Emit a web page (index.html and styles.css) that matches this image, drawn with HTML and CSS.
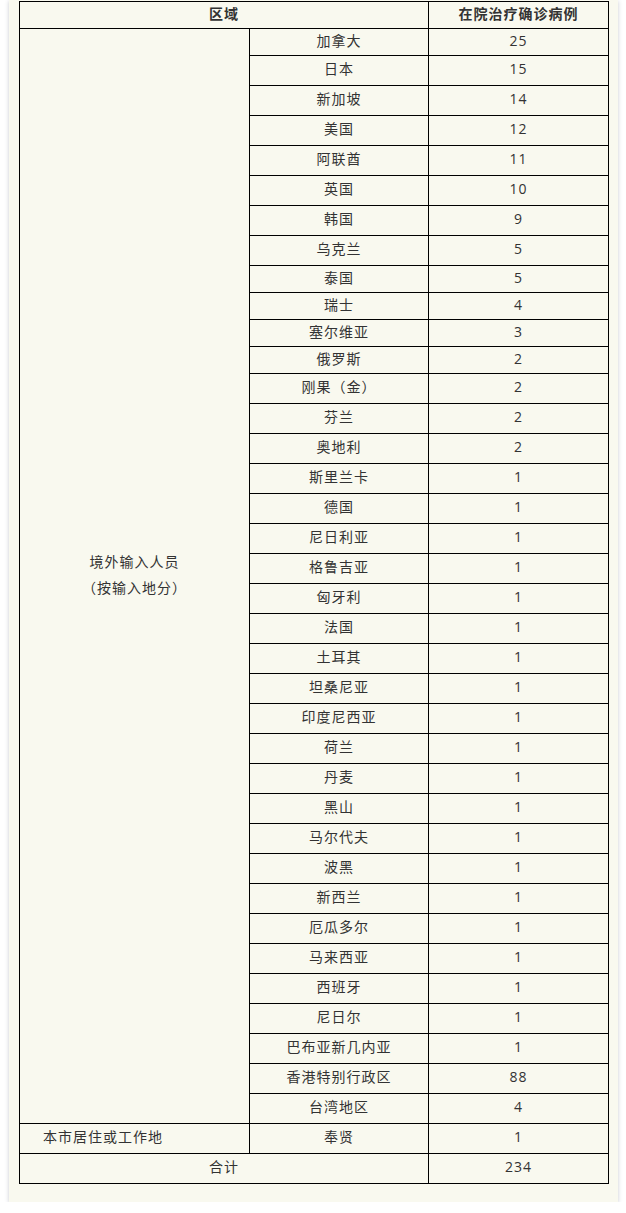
FILE: index.html
```html
<!DOCTYPE html>
<html lang="zh-CN">
<head>
<meta charset="utf-8">
<title>在院治疗确诊病例</title>
<link rel="stylesheet" href="styles.css">
</head>
<body>
<div class="card">
<table class="cases">
<colgroup><col class="c1"><col class="c2"><col class="c3"></colgroup>
<thead>
<tr class="head"><th colspan="2">区域</th><th>在院治疗确诊病例</th></tr>
</thead>
<tbody>
<tr class="s"><td rowspan="37" class="group"><p>境外输入人员</p><p>（按输入地分）</p></td><td>加拿大</td><td>25</td></tr>
<tr><td>日本</td><td>15</td></tr>
<tr><td>新加坡</td><td>14</td></tr>
<tr><td>美国</td><td>12</td></tr>
<tr><td>阿联酋</td><td>11</td></tr>
<tr><td>英国</td><td>10</td></tr>
<tr><td>韩国</td><td>9</td></tr>
<tr><td>乌克兰</td><td>5</td></tr>
<tr class="s"><td>泰国</td><td>5</td></tr>
<tr class="s"><td>瑞士</td><td>4</td></tr>
<tr class="s"><td>塞尔维亚</td><td>3</td></tr>
<tr class="s"><td>俄罗斯</td><td>2</td></tr>
<tr><td>刚果（金）</td><td>2</td></tr>
<tr><td>芬兰</td><td>2</td></tr>
<tr><td>奥地利</td><td>2</td></tr>
<tr><td>斯里兰卡</td><td>1</td></tr>
<tr><td>德国</td><td>1</td></tr>
<tr><td>尼日利亚</td><td>1</td></tr>
<tr><td>格鲁吉亚</td><td>1</td></tr>
<tr><td>匈牙利</td><td>1</td></tr>
<tr><td>法国</td><td>1</td></tr>
<tr><td>土耳其</td><td>1</td></tr>
<tr><td>坦桑尼亚</td><td>1</td></tr>
<tr><td>印度尼西亚</td><td>1</td></tr>
<tr><td>荷兰</td><td>1</td></tr>
<tr><td>丹麦</td><td>1</td></tr>
<tr><td>黑山</td><td>1</td></tr>
<tr><td>马尔代夫</td><td>1</td></tr>
<tr><td>波黑</td><td>1</td></tr>
<tr><td>新西兰</td><td>1</td></tr>
<tr><td>厄瓜多尔</td><td>1</td></tr>
<tr><td>马来西亚</td><td>1</td></tr>
<tr><td>西班牙</td><td>1</td></tr>
<tr><td>尼日尔</td><td>1</td></tr>
<tr><td>巴布亚新几内亚</td><td>1</td></tr>
<tr><td>香港特别行政区</td><td>88</td></tr>
<tr><td>台湾地区</td><td>4</td></tr>
<tr><td class="local">本市居住或工作地</td><td>奉贤</td><td>1</td></tr>
<tr><td colspan="2">合计</td><td>234</td></tr>
</tbody>
</table>
</div>
</body>
</html>
```

FILE: styles.css
```css
html, body {
  margin: 0;
  padding: 0;
  background: #ffffff;
}

body {
  font-family: "Open Sans", "Noto Sans CJK SC", sans-serif;
  color: #333333;
}

.card {
  width: 609px;
  margin-left: 9px;
  padding: 1px 10px 18px 10px;
  box-sizing: border-box;
  background: #f9f9ef;
  box-shadow: 0 1px 4px rgba(60, 70, 90, 0.28);
}

.cases {
  border-collapse: collapse;
  table-layout: fixed;
  width: 589px;
  font-size: 14px;
  letter-spacing: 1px;
}

.c1 { width: 230px; }
.c2 { width: 179px; }
.c3 { width: 180px; }

.cases th,
.cases td {
  border: 1px solid #000000;
  padding: 0 0 3px 0;
  height: 26px;
  text-align: center;
  vertical-align: middle;
  line-height: 20px;
}

.cases th {
  font-weight: bold;
  height: 23px;
}

.cases tr.s td {
  height: 23px;
}

.cases td.group {
  height: auto;
  padding-bottom: 2px;
}

.group p {
  margin: 0;
  line-height: 26px;
}

.cases td.local {
  text-align: left;
  padding-left: 23px;
}
```
